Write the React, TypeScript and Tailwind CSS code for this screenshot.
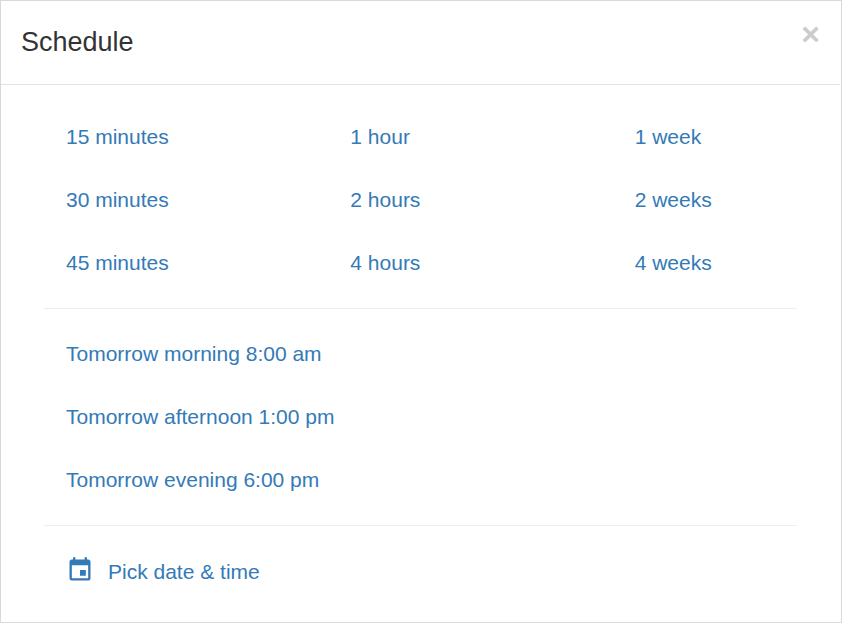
import React from 'react';
import { MdEvent } from 'react-icons/md';

const columns = [
  ['15 minutes', '30 minutes', '45 minutes'],
  ['1 hour', '2 hours', '4 hours'],
  ['1 week', '2 weeks', '4 weeks'],
];

const tomorrow = ['Tomorrow morning 8:00 am', 'Tomorrow afternoon 1:00 pm', 'Tomorrow evening 6:00 pm'];

interface OptionListProps {
  items: string[];
}

const OptionList: React.FC<OptionListProps> = ({ items }) => (
  <ul>
    {items.map((item) => (
      <li key={item} className="py-4">
        <a href="#" className="block leading-[31px] hover:underline">
          {item}
        </a>
      </li>
    ))}
  </ul>
);

const App: React.FC = () => {
  return (
    <div
      role="dialog"
      aria-labelledby="schedule-title"
      className="min-h-screen border border-[#d9d9d9] bg-white font-['Liberation_Sans',Arial,sans-serif] text-[21px] text-[#337ab7]"
    >
      {/* Header */}
      <div className="mr-px flex items-start justify-between border-b border-[#e2e2e2] px-5 pt-5 pb-5">
        <h4 id="schedule-title" className="text-[27px] leading-[43px] text-[#333]">
          Schedule
        </h4>
        <button type="button" aria-label="Close" className="text-[32px] leading-[26px] font-bold text-[#ccc]">
          ×
        </button>
      </div>

      {/* Body */}
      <div className="pt-5 pr-11 pb-5 pl-[43px]">
        <div className="grid grid-cols-3 gap-x-[144px] px-[22px] pb-[14px]">
          {columns.map((items) => (
            <OptionList key={items[0]} items={items} />
          ))}
        </div>
        <div className="border-y border-[#eee] px-[22px] pt-[13px] pb-[14px]">
          <OptionList items={tomorrow} />
        </div>
        <a href="#" className="mx-[22px] mt-[30px] flex items-start gap-[14px] leading-[31px] hover:underline">
          <MdEvent className="size-7" />
          Pick date &amp; time
        </a>
      </div>
    </div>
  );
};

export default App;
